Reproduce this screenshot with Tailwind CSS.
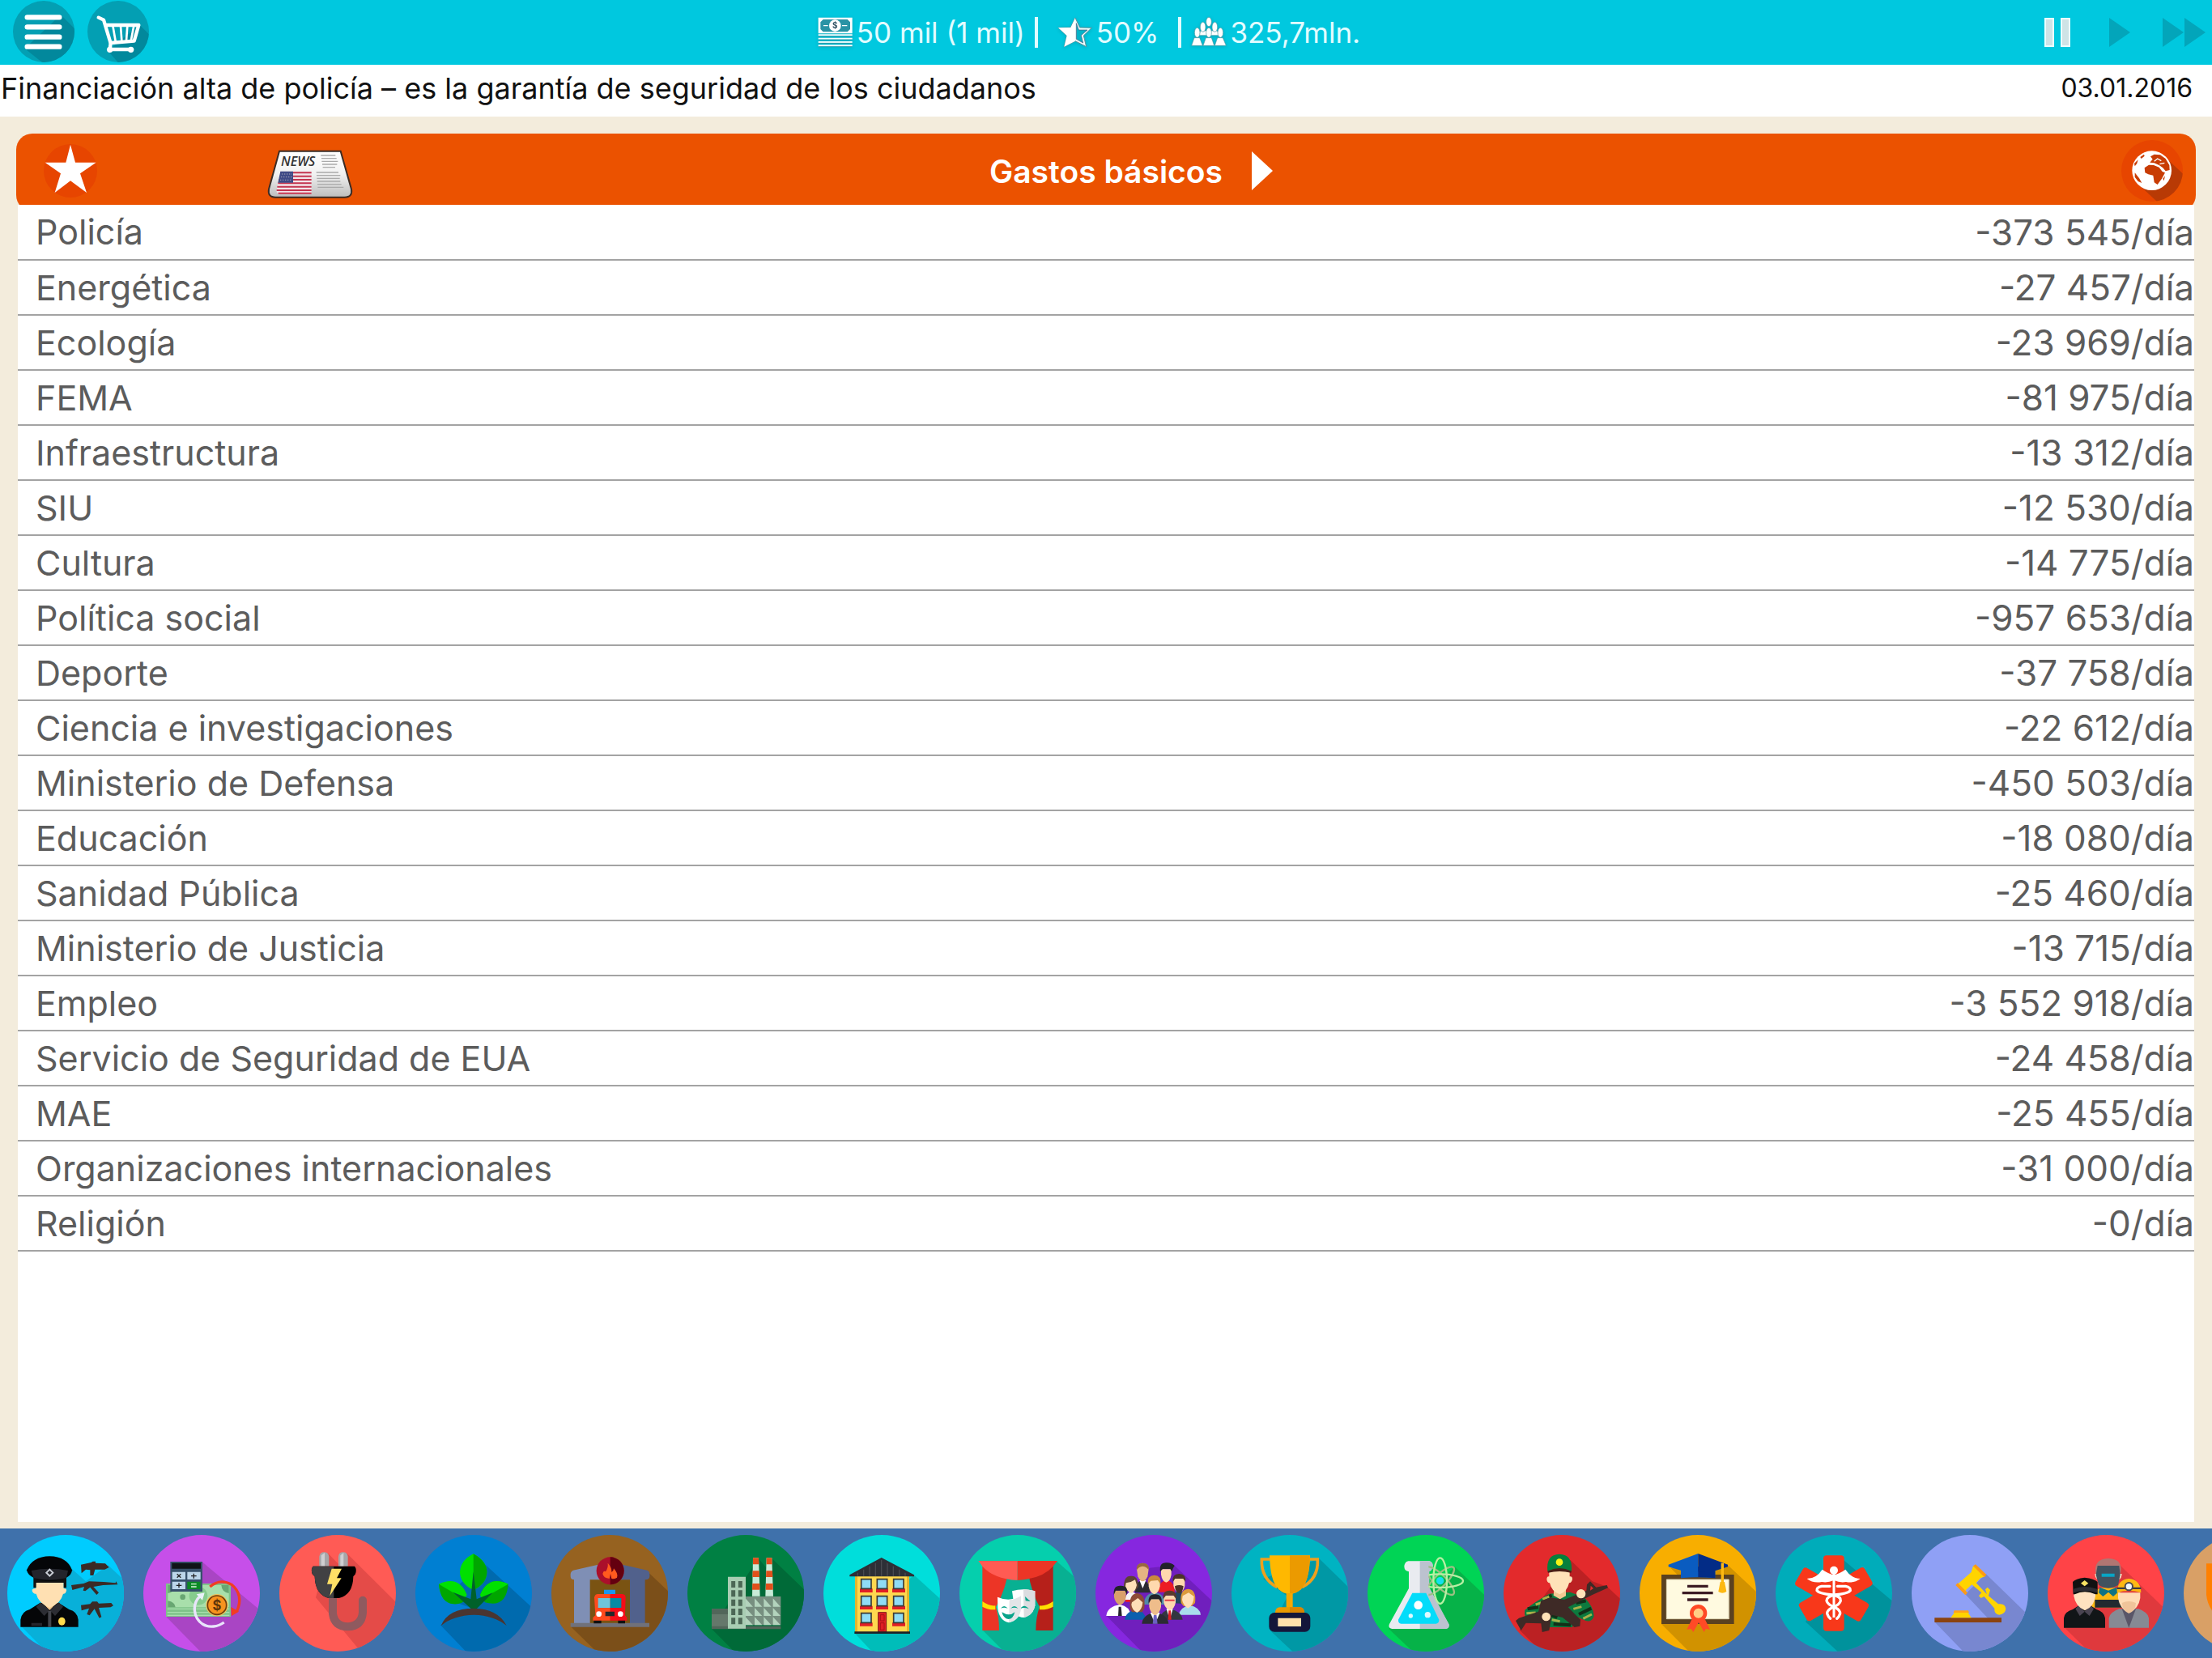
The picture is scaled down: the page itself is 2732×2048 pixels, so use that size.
<!DOCTYPE html>
<html lang="es">
    <head>
        <meta charset="UTF-8">
        <meta name="viewport" content="width=device-width, initial-scale=1.0">
        <title>Gastos básicos</title>
        <script src="https://cdn.jsdelivr.net/npm/@tailwindcss/browser@4"></script>
    </head>
    <body class="min-h-screen flex flex-col overflow-x-hidden bg-[#f3ecdc] font-[Inter,'Noto_Sans',sans-serif]">
        <!-- Barra superior -->
        <header class="h-20 bg-[#00c8df] flex items-center justify-between pl-4 pr-2">
            <div class="flex w-[500px] gap-4 pb-0.5">
                <button type="button" aria-label="Menú" class="size-[76px] rounded-full overflow-hidden bg-[#039fb3]">
                    <svg class="size-full" viewBox="48 3 228 228">
                        <path d="M225 55 290 120V250H180L92 180Z" fill="#02889c"/>
                        <path d="M101 64H220M101 100H220M101 137H220M101 173H220" stroke="#fff" stroke-width="19" stroke-linecap="round"/>
                    </svg>
                </button>
                <button type="button" aria-label="Tienda" class="size-[76px] rounded-full overflow-hidden bg-[#039fb3]">
                    <svg class="size-full" viewBox="322 3 228 228">
                        <path d="M515 92 580 157V260H460L398 188Z" fill="#02889c"/>
                        <g fill="none" stroke="#fff" stroke-linecap="round" stroke-linejoin="round">
                            <path d="M363 65 382 74 408 160 405 183H482" stroke-width="13"/>
                            <path d="M392 93H512L495 152 408 159" stroke-width="13"/>
                            <path d="M416 95 426 152M445 95 449 152M470 95 466 152M494 95 483 152" stroke-width="8"/>
                        </g>
                        <circle cx="405" cy="184" r="11" fill="#fff"/>
                        <circle cx="483" cy="184" r="11" fill="#fff"/>
                    </svg>
                </button>
            </div>
            <div class="flex items-center text-[35px] leading-none text-[#e2fcff]">
                <svg class="w-11 h-10 mr-1 drop-shadow-sm" viewBox="36 64 132 120">
                    <path d="M38 69H164V128H38Z" fill="#fff"/>
                    <path d="M56 76H146L156 86V112L146 122H56L46 112V86Z" fill="#2a93a5"/>
                    <path d="M57 99H74M126 99H145" stroke="#fff" stroke-width="4"/>
                    <circle cx="100" cy="99" r="22" fill="#fff"/>
                    <text x="100" y="110" text-anchor="middle" font-size="30" font-weight="700" fill="#356">$</text>
                    <path d="M38 134H164M38 147H164M38 160H164M38 173H164" stroke="#f4ffff" stroke-width="6"/>
                    <path d="M38 138H164M38 151H164M38 164H164M38 177H164" stroke="#4b8d98" stroke-width="2"/>
                </svg>
                <span>50 mil (1 mil)</span>
                <span class="w-1 h-[38px] ml-3 mr-6 bg-[#e2fcff]"></span>
                <svg class="w-11 h-10 mr-1 drop-shadow-sm" viewBox="923 60 132 120">
                    <path d="M989 66 1006 102 1050 103 1020 132 1030 173 989 152 948 173 958 132 926 103 972 102Z" fill="#eaffff" stroke="#5b8f98" stroke-width="3"/>
                    <path d="M993 86 1002 111 1034 111 1011 131 1018 159 993 145Z" fill="#04b3c8" stroke="#557" stroke-width="2"/>
                    <path d="M989 66V152L948 173 958 132 926 103 972 102Z" fill="#fff"/>
                </svg>
                <span>50%</span>
                <span class="w-1 h-[38px] ml-6 mr-3 bg-[#e2fcff]"></span>
                <svg class="w-11 h-10 mr-1 drop-shadow-sm" viewBox="1415 64 132 120">
                    <g fill="#fff" stroke="#4f98a3" stroke-width="2">
                        <path d="M1444 135 1450 118H1512L1520 135Z"/>
                        <ellipse cx="1481" cy="85" rx="10" ry="17"/>
                        <ellipse cx="1459" cy="104" rx="10" ry="18"/>
                        <ellipse cx="1503" cy="104" rx="10" ry="18"/>
                        <path d="M1417 173 1427 144H1447L1458 173ZM1503 173 1513 144H1533L1545 173ZM1460 173 1470 144H1491L1501 173Z"/>
                        <ellipse cx="1438" cy="125" rx="10" ry="18"/>
                        <ellipse cx="1481" cy="125" rx="10" ry="18"/>
                        <ellipse cx="1524" cy="125" rx="10" ry="18"/>
                    </g>
                </svg>
                <span>325,7mln.</span>
            </div>
            <div class="flex w-[550px] justify-end items-center gap-12">
                <button type="button" aria-label="Pausa" class="flex gap-2">
                    <span class="w-3 h-9 border-2 border-[#eaffff] bg-[#cfe3e6]"></span>
                    <span class="w-3 h-9 border-2 border-[#eaffff] bg-[#cfe3e6]"></span>
                </button>
                <button type="button" aria-label="Reproducir">
                    <svg class="w-[26px] h-9" viewBox="0 0 26 36"><path d="M0 0 26 18 0 36Z" fill="#03a5ba"/></svg>
                </button>
                <button type="button" aria-label="Avance rápido" class="-ml-2">
                    <svg class="w-[53px] h-9" viewBox="0 0 53 36"><path d="M0 0 26 18 0 36ZM27 0 53 18 27 36Z" fill="#03a5ba"/></svg>
                </button>
            </div>
        </header>

        <!-- Noticias y fecha -->
        <div class="h-16 bg-white flex items-center justify-between pl-px pr-6 pb-1.5 text-[#111]">
            <p class="text-[36px] leading-none">Financiación alta de policía – es la garantía de seguridad de los ciudadanos</p>
            <time datetime="2016-01-03" class="text-[32px] leading-none">03.01.2016</time>
        </div>

        <main class="flex-1 flex flex-col px-5 pt-[21px] pb-2">
            <div class="h-24 rounded-[20px] bg-[#eb5200] flex items-center justify-between pl-[34px] pr-4 pb-1">
                <div class="flex w-[500px] items-center">
                    <button type="button" aria-label="Favoritos" class="size-[66px] rounded-full bg-[#e74500]">
                        <svg class="size-full" viewBox="73 57 198 198"><path d="M172 59 190 125H267L208 166 232 237 172 193 114 237 136 166 78 125H155Z" fill="#fff"/></svg>
                    </button>
                    <button type="button" aria-label="Noticias" class="ml-[210px] mt-2">
                        <svg class="w-[106px] h-[60px]" viewBox="901 76 318 180">
                            <defs>
                                <linearGradient id="papel" x1="0" y1="0" x2="0" y2="1">
                                    <stop offset="0" stop-color="#fff"/>
                                    <stop offset=".5" stop-color="#f1f1f1"/>
                                    <stop offset="1" stop-color="#bdbdbd"/>
                                </linearGradient>
                            </defs>
                            <path d="M946 81H1173L1213 222Q1218 252 1188 252H932Q902 252 907 222Z" fill="url(#papel)" stroke="#3c2c25" stroke-width="6"/>
                            <text x="952" y="135" font-family="Open Sans" font-size="48" font-style="italic" font-weight="600" fill="#333">NEWS</text>
                            <path d="M950 156H1065V240H948Q934 238 936 226Z" fill="#f3e6ea"/>
                            <path d="M950 161H1065M947 174H1065M944 187H1065M941 200H1065M938 213H1065M936 226H1065M942 237H1065" stroke="#c43550" stroke-width="6"/>
                            <path d="M950 156H997V198H941Z" fill="#3f4a86"/>
                            <path d="M955 166H993M952 177H993M949 188H993" stroke="#aab" stroke-width="3" stroke-dasharray="4 5"/>
                            <path d="M1100 97H1154M1102 108H1158M1103 119H1163M1105 130H1160M1107 141H1153M1083 160H1165M1084 171H1172M1085 182H1170M1086 193H1172M1087 204H1176M1088 215H1184" stroke="#aaa" stroke-width="4"/>
                        </svg>
                    </button>
                </div>
                <button type="button" class="flex items-center gap-9 text-[39px] leading-none font-semibold text-white">
                    Gastos básicos
                    <svg class="w-[26px] h-12" viewBox="0 0 26 48"><path d="M0 0 26 24 0 48Z" fill="#fff"/></svg>
                </button>
                <div class="flex w-[456px] justify-end">
                    <button type="button" aria-label="Mundo" class="size-[76px] rounded-full overflow-hidden bg-[#e74500]">
                        <svg class="size-full" viewBox="964 519 228 228">
                            <path d="M1126 582 1210 660V760H1110L1026 682Z" fill="#b83a05"/>
                            <circle cx="1077" cy="632" r="73" fill="#fff"/>
                            <g fill="#c83c04">
                                <path d="M1050 622 1066 611 1084 612 1104 620 1116 636 1126 640 1114 662 1098 684 1086 676 1082 650 1064 646 1052 640Z"/>
                                <path d="M1070 602 1080 590 1072 580 1086 572 1108 574 1128 588 1142 612 1143 630 1128 634 1118 622 1104 612 1086 604Z"/>
                                <path d="M1014 640 1030 660 1040 678 1026 672 1014 656ZM1012 606 1026 592 1022 606 1014 616ZM1034 582 1048 572 1050 578 1038 588ZM1118 662 1126 652 1122 670Z"/>
                            </g>
                            <path d="M1086 598 1098 588 1112 596M1106 608 1124 604" fill="none" stroke="#fff" stroke-width="4"/>
                        </svg>
                    </button>
                </div>
            </div>

            <!-- Lista de gastos -->
            <div class="relative -mt-2 mx-0.5 flex-1 bg-white">
                <table class="w-full leading-none text-[#5c5c5c]">
                    <tbody id="gastos"></tbody>
                </table>
            </div>
        </main>

        <!-- Ministerios -->
        <nav class="h-40 bg-[#3f71ab] flex items-center gap-6 pl-[9px] overflow-hidden">
            <button type="button" aria-label="Policía" class="size-36 shrink-0 rounded-full overflow-hidden bg-[#00ccff]">
                <svg class="size-full" viewBox="27 78 432 432">
                    <path d="M262 200 318 250 400 190 470 255V520H180L80 418Z" fill="#08b0d9"/>
                    <path d="M76 419V392Q80 362 110 354L148 330H218L256 354Q287 362 290 392V419Z" fill="#050608"/>
                    <path d="M150 322H216L184 358Z" fill="#f6c98c"/>
                    <path d="M132 240H236V276Q250 276 245 288 242 298 234 296 226 330 184 348 142 330 134 296 124 298 119 286 118 276 132 276Z" fill="#ffe0b2"/>
                    <path d="M124 230H246V274H236V255H134V274H124Z" fill="#111"/>
                    <path d="M99 208Q120 158 184 157 248 158 267 208 266 226 246 236 184 262 124 236 102 226 99 208Z" fill="#050608"/>
                    <path d="M116 210Q184 196 252 210L246 238Q184 252 124 238Z" fill="#23242b"/>
                    <path d="M184 206 196 218 184 230 172 218Z" fill="none" stroke="#c8ccd4" stroke-width="6"/>
                    <path d="M134 344 150 328 184 356 164 378ZM234 344 218 328 184 356 204 378Z" fill="#2c2d33"/>
                    <path d="M178 360H190V419H178Z" fill="#44464d"/>
                    <path d="M116 404H156V415H116Z" fill="#25262c"/>
                    <ellipse cx="229" cy="398" rx="13" ry="15" fill="#ffdc4e"/>
                    <g fill="#3b2a25">
                        <path d="M300 188 338 180 344 176H354V182L390 184 404 198 388 206 352 206 346 228H334V208L318 206 302 220Z"/>
                        <path d="M264 264 310 258 330 250 384 252 428 256 430 250 436 262 382 264 346 270 366 292 358 300 334 272 316 286 308 284 312 270 268 282Z"/>
                        <path d="M300 338 334 334 342 325H360L366 332 412 330 420 340 410 346 366 348 376 382 368 386 350 352 332 376 322 372 330 350 302 358Z"/>
                    </g>
                </svg>
            </button>
            <button type="button" aria-label="Finanzas" class="size-36 shrink-0 rounded-full overflow-hidden bg-[#c64fe9]">
                <svg class="size-full" viewBox="531 78 432 432">
                    <path d="M749 178 970 362V520H752L615 380Z" fill="#a945c4"/>
                    <path d="M615 258H855V381H615Z" fill="#7fc389"/>
                    <path d="M620 352H850M620 365H850M620 376H850" stroke="#a9dfae" stroke-width="4"/>
                    <path d="M622 264H848V346H622Z" fill="#a8dfab"/>
                    <path d="M622 264H650Q648 290 622 294ZM848 264H820Q822 290 848 294ZM622 346H650Q648 326 622 322Z" fill="#68a672"/>
                    <circle cx="735" cy="304" r="34" fill="#86cc8e"/>
                    <circle cx="677" cy="308" r="10" fill="#68a672"/>
                    <path d="M631 177H750V288H631Z" fill="#37516b"/>
                    <path d="M637 182H744V203H637Z" fill="#101418"/>
                    <path d="M638 215H687V243H638ZM694 215H743V243H694ZM638 251H687V279H638Z" fill="#bcd6ea"/>
                    <path d="M694 251H743V279H694Z" fill="#0c8a25"/>
                    <path d="M656 223 670 236M670 223 656 236M708 230H728M718 221V239M653 265H673M663 256V274" stroke="#222" stroke-width="4"/>
                    <path d="M708 260H728M708 270H728" stroke="#d8f5d8" stroke-width="4"/>
                    <path d="M778 270Q815 238 858 262 904 300 878 360" fill="none" stroke="#f23c22" stroke-width="10"/>
                    <path d="M856 345 885 362 858 378Z" fill="#f23c22"/>
                    <path d="M742 304C710 334 716 384 750 408 776 424 808 418 830 402" fill="none" stroke="#e9e4fb" stroke-width="10"/>
                    <path d="M758 292 728 298 750 320Z" fill="#e9f2fb"/>
                    <circle cx="804" cy="338" r="41" fill="#f0c35a"/>
                    <circle cx="804" cy="338" r="35" fill="#f7931e" stroke="#6e3d0c" stroke-width="5"/>
                    <text x="804" y="356" text-anchor="middle" font-size="50" font-weight="700" fill="#5f350a">$</text>
                </svg>
            </button>
            <button type="button" aria-label="Energética" class="size-36 shrink-0 rounded-full overflow-hidden bg-[#ff5b55]">
                <svg class="size-full" viewBox="1035 78 432 432">
                    <path d="M1214 145 1258 190 1284 145 1480 340V520H1345L1170 310Z" fill="#e44b48"/>
                    <path d="M1233 300V370Q1240 418 1288 418 1340 416 1344 366V320" fill="none" stroke="#8f5a5f" stroke-width="30" stroke-linecap="round"/>
                    <path d="M1183 194V158Q1186 142 1200 142 1217 142 1219 158V194ZM1254 194V158Q1256 142 1271 142 1287 142 1289 158V194Z" fill="#a6a6a8"/>
                    <path d="M1190 194V154L1203 144V194ZM1261 194V154L1273 144V194Z" fill="#cfcfd1"/>
                    <path d="M1160 194H1314Q1324 206 1316 224L1309 232Q1308 300 1256 312H1218Q1168 300 1166 232L1158 224Q1150 206 1160 194Z" fill="#000"/>
                    <path d="M1160 194H1237V312H1218Q1168 300 1166 232L1158 224Q1150 206 1160 194Z" fill="#414143"/>
                    <path d="M1229 203H1266L1248 238H1265L1222 304 1231 260H1212Z" fill="#ffe066"/>
                </svg>
            </button>
            <button type="button" aria-label="Ecología" class="size-36 shrink-0 rounded-full overflow-hidden bg-[#007fd2]">
                <svg class="size-full" viewBox="39 78 432 432">
                    <path d="M296 186 480 355V520H236L132 412 250 350 140 310Z" fill="#006aae"/>
                    <path d="M254 148Q304 176 304 216 302 260 254 282 206 260 204 216 206 172 254 148Z" fill="#00e000"/>
                    <path d="M254 148Q304 176 304 216 302 260 254 282Z" fill="#00a600"/>
                    <path d="M126 260Q200 226 230 300L212 328Q134 350 126 260Z" fill="#00e000"/>
                    <path d="M126 260 224 318Q212 336 180 334 132 330 126 260Z" fill="#00a600"/>
                    <path d="M383 260Q310 226 279 300L297 328Q376 350 383 260Z" fill="#00a600"/>
                    <path d="M383 260 285 316 279 300Q310 226 383 260Z" fill="#00e000"/>
                    <path d="M254 214 266 316 326 292 266 352H246L178 290 244 316Z" fill="#00612a"/>
                    <path d="M134 414Q160 350 256 350 346 352 377 414 330 376 256 374 180 376 134 414Z" fill="#4a3530"/>
                </svg>
            </button>
            <button type="button" aria-label="FEMA" class="size-36 shrink-0 rounded-full overflow-hidden bg-[#966220]">
                <svg class="size-full" viewBox="543 78 432 432">
                    <path d="M904 218 990 300V520H720L615 418Z" fill="#7b4f19"/>
                    <path d="M684 244H836V408H684Z" fill="#7a5312"/>
                    <path d="M627 240H686V408H627ZM614 222Q616 210 630 208L716 188H761V244H628Q614 244 614 232Z" fill="#7f8fb5"/>
                    <path d="M834 240H890V408H834ZM761 188H806L892 208Q906 210 907 222V232Q906 244 892 244H761Z" fill="#51618c"/>
                    <path d="M614 404H906V419H614Z" fill="#70717a"/>
                    <circle cx="761" cy="211" r="51" fill="#ab0f2b"/>
                    <path d="M761 160A51 51 0 0 1 761 262Z" fill="#64000f"/>
                    <path d="M752 182Q768 200 766 216 774 212 774 202 792 222 786 236 776 242 766 240L762 222 758 240Q736 238 733 222 736 208 744 214 754 200 752 182Z" fill="#ff5a1e"/>
                    <path d="M738 281H780V300H738Z" fill="#1a95f0"/>
                    <path d="M700 392H728V406H700ZM790 392H816V406H790Z" fill="#111"/>
                    <path d="M702 310Q704 297 716 297H761V395H697V384L706 376Z" fill="#ff4a1c"/>
                    <path d="M761 297H806Q818 298 818 310L816 376 823 384V395H761Z" fill="#f50d18"/>
                    <path d="M716 312H761V348H716Z" fill="#6fc5da"/>
                    <path d="M761 312H802V348H761Z" fill="#078aa3"/>
                    <path d="M743 362H777V379H743Z" fill="#26262a"/>
                    <circle cx="719" cy="371" r="10" fill="#fff"/>
                    <circle cx="799" cy="371" r="10" fill="#fff"/>
                </svg>
            </button>
            <button type="button" aria-label="Infraestructura" class="size-36 shrink-0 rounded-full overflow-hidden bg-[#008043]">
                <svg class="size-full" viewBox="1047 78 432 432">
                    <path d="M1310 165 1340 200 1360 165 1490 290V520H1230L1136 425Z" fill="#006a38"/>
                    <path d="M1290 163H1311L1316 305H1287ZM1340 163H1360L1365 305H1336Z" fill="#c9ead7"/>
                    <path d="M1290 163H1311L1312 187H1290ZM1289 211H1313L1314 234H1288ZM1288 258H1315V281H1287ZM1340 163H1360L1361 187H1340ZM1339 211H1362L1363 234H1338ZM1338 258H1364V281H1337Z" fill="#e2501b"/>
                    <path d="M1137 352H1200V425H1137Z" fill="#65786b"/>
                    <path d="M1137 352H1200V372H1137ZM1137 416H1393V427H1137Z" fill="#52665a"/>
                    <path d="M1262 306H1393V412H1262Z" fill="#778f80"/>
                    <path d="M1262 313 1290 344H1262ZM1296 313 1324 344H1296ZM1330 313 1358 344H1330ZM1364 313 1392 344H1364ZM1262 348 1290 378H1262ZM1296 348 1324 378H1296ZM1330 348 1358 378H1330ZM1364 348 1392 378H1364ZM1262 382 1290 412H1262ZM1296 382 1324 412H1296ZM1330 382 1358 412H1330ZM1364 382 1392 412H1364Z" fill="#b3d3bd"/>
                    <path d="M1197 233H1263V425H1197Z" fill="#a9cdb3"/>
                    <path d="M1217 249V410M1243 249V410" stroke="#4c6756" stroke-width="15" stroke-dasharray="24 10"/>
                </svg>
            </button>
            <button type="button" aria-label="Vivienda" class="size-36 shrink-0 rounded-full overflow-hidden bg-[#00dedb]">
                <svg class="size-full" viewBox="51 78 432 432">
                    <path d="M386 226 500 330V520H240L168 443Z" fill="#00bdb9"/>
                    <path d="M168 228H369V438H168Z" fill="#ffd84f"/>
                    <path d="M168 228H177V438H168ZM360 228H369V438H360Z" fill="#e3b62d"/>
                    <path d="M266 162 387 226V232H148V226Z" fill="#2d2f36"/>
                    <path d="M266 170V230M244 182V230M222 194V230M200 206V230M178 218V230M288 182V230M310 194V230M332 206V230M354 218V230" stroke="#484a50" stroke-width="4"/>
                    <path d="M186 277H233V291H186ZM246 277H291V291H246ZM306 277H354V291H306ZM186 341H233V354H186ZM246 341H291V354H246ZM306 341H354V354H306ZM186 403H233V416H186ZM306 403H354V416H306Z" fill="#e01e24"/>
                    <g fill="#8fdcf5" stroke="#3d3a34" stroke-width="5">
                        <path d="M191 242H228V277H191ZM250 242H287V277H250ZM311 242H348V277H311ZM191 305H228V341H191ZM250 305H287V341H250ZM311 305H348V341H311ZM191 368H228V403H191ZM311 368H348V403H311Z"/>
                    </g>
                    <path d="M254 365H284V438H254Z" fill="#e01e24" stroke="#7c1a1a" stroke-width="3"/>
                    <path d="M262 374H276V396H262ZM262 404H276V430H262Z" fill="none" stroke="#a81218" stroke-width="3"/>
                    <path d="M166 436H372V444H166Z" fill="#1c2226"/>
                </svg>
            </button>
            <button type="button" aria-label="Cultura" class="size-36 shrink-0 rounded-full overflow-hidden bg-[#05cfad]">
                <svg class="size-full" viewBox="555 78 432 432">
                    <path d="M916 176 1000 250V520H730L640 430Z" fill="#08b092"/>
                    <path d="M700 240H840V432H700Z" fill="#08b092"/>
                    <path d="M640 190H740Q728 280 690 345 702 380 702 432H640Z" fill="#ec3526"/>
                    <path d="M902 190H806Q816 280 852 345 838 380 838 432H902Z" fill="#b6201a"/>
                    <path d="M625 174H770V246Q680 240 640 194Z" fill="#ff5b53"/>
                    <path d="M918 174H770V246Q862 240 902 194Z" fill="#ec3526"/>
                    <path d="M640 324Q664 342 688 340V355Q660 356 640 344ZM902 324Q878 342 852 340V355Q882 356 902 344Z" fill="#ffe000"/>
                    <path d="M750 286Q792 274 835 286V340Q828 376 794 384 774 384 762 370Z" fill="#fff"/>
                    <path d="M792 279Q814 279 835 286V340Q828 376 794 384Z" fill="#dcdde0"/>
                    <path d="M798 306 818 324 800 322ZM780 352Q794 330 812 352 794 344 780 352Z" fill="#08a38a"/>
                    <path d="M696 308Q740 328 783 304V350Q780 392 738 403 702 394 697 350Z" fill="#fff"/>
                    <path d="M740 318Q762 318 783 304V350Q780 392 738 403Z" fill="#e3e5e8"/>
                    <path d="M708 350Q720 334 734 350 720 344 708 350ZM745 350Q758 334 772 350 758 344 745 350ZM712 364Q740 382 760 364 754 390 736 390 718 388 712 364Z" fill="#08a38a"/>
                </svg>
            </button>
            <button type="button" aria-label="Política social" class="size-36 shrink-0 rounded-full overflow-hidden bg-[#8627df]">
                <svg class="size-full" viewBox="1059 78 432 432">
                    <path d="M1350 190 1510 340V520H1240L1100 378 1260 200Z" fill="#701fbd"/>
                    <!-- fila trasera -->
                    <path d="M1206 292Q1206 250 1234 246 1262 250 1262 292Z" fill="#2b2b33"/>
                    <path d="M1222 246H1246L1234 276Z" fill="#fff"/>
                    <path d="M1292 290Q1292 250 1322 246 1352 250 1352 290Z" fill="#ec1c24"/>
                    <path d="M1212 205Q1212 184 1234 182 1256 184 1256 205L1252 232Q1244 250 1234 250 1224 250 1216 232Z" fill="#e5b483"/>
                    <path d="M1212 208Q1208 182 1234 182 1260 182 1256 208 1250 196 1234 194 1218 196 1212 208Z" fill="#99693f"/>
                    <path d="M1302 205H1340V225Q1336 250 1321 254 1306 250 1302 225Z" fill="#ffd9ae"/>
                    <path d="M1299 214Q1294 180 1322 181 1340 180 1352 192 1346 200 1342 214L1336 204 1308 204Z" fill="#22222a"/>
                    <!-- segunda fila -->
                    <path d="M1168 320Q1170 292 1192 288 1216 292 1218 320Z" fill="#f4f4f6"/>
                    <path d="M1238 336Q1240 296 1278 290 1316 296 1318 336Z" fill="#5289a8"/>
                    <path d="M1342 330Q1344 292 1368 284 1394 292 1394 334Z" fill="#23455e"/>
                    <path d="M1164 270Q1164 228 1191 230 1218 228 1218 270L1206 286H1174Z" fill="#5d4235"/>
                    <path d="M1172 256Q1192 254 1206 244L1212 264Q1206 290 1191 294 1176 288 1170 268Z" fill="#ffe0b8"/>
                    <path d="M1256 244H1298V268Q1294 292 1277 298 1260 292 1256 268Z" fill="#ffd9ae"/>
                    <path d="M1253 260Q1250 228 1277 227 1304 228 1300 260L1290 246 1264 248Z" fill="#c98a3c"/>
                    <path d="M1348 240H1390V266Q1386 288 1369 292 1352 288 1348 266Z" fill="#ffd9ae"/>
                    <path d="M1346 252Q1342 222 1369 222 1396 222 1392 252L1384 240H1354Z" fill="#4c3329"/>
                    <path d="M1353 268Q1369 260 1385 268 1382 294 1369 294 1356 294 1353 268Z" fill="#4c3329"/>
                    <path d="M1170 318H1190V326H1170Z" fill="#ec1c24"/>
                    <!-- primera fila -->
                    <path d="M1099 378Q1102 344 1150 336 1186 342 1190 378Z" fill="#fff"/>
                    <path d="M1145 344H1154L1157 378H1143Z" fill="#26262e"/>
                    <path d="M1128 284H1172V308Q1168 332 1150 338 1132 332 1128 308Z" fill="#d9a06b"/>
                    <path d="M1127 300Q1124 266 1150 266 1182 264 1176 300L1168 284H1134Z" fill="#22222a"/>
                    <path d="M1368 374Q1372 346 1408 338 1446 346 1449 374Z" fill="#a9dcec"/>
                    <path d="M1376 330Q1370 280 1402 278 1434 280 1428 330L1416 342H1386Z" fill="#dc9a3c"/>
                    <path d="M1382 304 1404 292 1424 306Q1422 340 1402 350 1384 340 1380 318Z" fill="#ffe0b8"/>
                    <path d="M1168 392Q1170 362 1212 354 1244 362 1246 392Z" fill="#0b5fae"/>
                    <path d="M1187 350Q1182 296 1213 294 1246 296 1240 350L1232 364H1194Z" fill="#8e4b36"/>
                    <path d="M1194 328 1216 312 1234 328Q1232 356 1213 366 1194 356 1192 336Z" fill="#ffe0b8"/>
                    <path d="M1296 392Q1300 362 1334 352 1378 362 1382 392Z" fill="#333640"/>
                    <path d="M1322 352H1346L1334 392Z" fill="#fff"/>
                    <path d="M1330 358H1338L1340 392H1328Z" fill="#e01e24"/>
                    <path d="M1312 302H1356V328Q1352 352 1334 358 1316 350 1312 328Z" fill="#ffd9ae"/>
                    <path d="M1310 316Q1306 284 1334 284 1362 284 1358 316L1348 302H1320Z" fill="#5b3a2c"/>
                    <path d="M1316 320H1352" stroke="#e2404a" stroke-width="6"/>
                    <path d="M1231 407Q1234 374 1280 364 1326 374 1330 407Z" fill="#2b2b33"/>
                    <path d="M1262 366H1298L1280 407Z" fill="#fff"/>
                    <path d="M1275 374H1285L1289 407H1271Z" fill="#6c5fc2"/>
                    <path d="M1258 316H1302V344Q1298 368 1280 376 1262 368 1258 344Z" fill="#efbd8b"/>
                    <path d="M1256 332Q1252 298 1280 298 1308 298 1304 332L1294 316H1266Z" fill="#22222a"/>
                </svg>
            </button>
            <button type="button" aria-label="Deporte" class="size-36 shrink-0 rounded-full overflow-hidden bg-[#00b3c2]">
                <svg class="size-full" viewBox="63 78 432 432">
                    <path d="M388 166 510 285V520H300L206 432 270 305 180 240Z" fill="#0098a5"/>
                    <path d="M206 168H175Q172 240 232 272M350 168H382Q386 240 324 272" fill="none" stroke="#f0a01c" stroke-width="11"/>
                    <path d="M204 154H354Q352 250 320 280 300 296 278 298 256 296 238 280 206 250 204 154Z" fill="#ffb800"/>
                    <path d="M279 154H354Q352 250 320 280 300 296 279 298Z" fill="#eb9a00"/>
                    <path d="M266 294H290V350H266Z" fill="#f6a800"/>
                    <path d="M224 368Q226 346 242 346H316Q332 346 334 368Z" fill="#eb9a00"/>
                    <path d="M279 346H316Q332 346 334 368H279Z" fill="#d88400"/>
                    <rect x="202" y="366" width="153" height="71" rx="20" fill="#14163a"/>
                    <path d="M235 386H321V417H235Z" fill="#ffe0ab"/>
                </svg>
            </button>
            <button type="button" aria-label="Ciencia e investigaciones" class="size-36 shrink-0 rounded-full overflow-hidden bg-[#00d455]">
                <svg class="size-full" viewBox="567 78 432 432">
                    <path d="M890 196 1010 310V520H745L646 426Z" fill="#06b248"/>
                    <path d="M718 175H796Q812 180 808 198 804 212 790 214V272L868 408Q872 424 856 426H658Q642 424 648 408L720 276V214Q704 212 703 196 704 178 718 175Z" fill="#e9ebf0"/>
                    <path d="M761 175H796Q812 180 808 198 804 212 796 214V272L868 408Q872 424 856 426H761Z" fill="#bcc2cf"/>
                    <path d="M733 293H784L832 392Q832 406 820 407H692Q680 406 681 392Z" fill="#04dcfa"/>
                    <circle cx="755" cy="338" r="16" fill="#fff"/>
                    <circle cx="790" cy="374" r="11" fill="#dffaff"/>
                    <circle cx="727" cy="378" r="8" fill="#dffaff"/>
                    <svg x="793" y="150" width="150" height="200" viewBox="793 150 150 200">
                        <g fill="none" stroke="#b7f0a4" stroke-width="7">
                            <ellipse cx="836" cy="248" rx="70" ry="22" transform="rotate(45 836 248)" stroke="#9bbf83"/>
                            <ellipse cx="836" cy="248" rx="70" ry="22" transform="rotate(-45 836 248)" stroke="#9bbf83"/>
                            <ellipse cx="836" cy="248" rx="25" ry="85"/>
                            <ellipse cx="836" cy="248" rx="85" ry="25"/>
                        </g>
                        <circle cx="836" cy="248" r="14" fill="#16dff0"/>
                    </svg>
                </svg>
            </button>
            <button type="button" aria-label="Ministerio de Defensa" class="size-36 shrink-0 rounded-full overflow-hidden bg-[#e32a2c]">
                <svg class="size-full" viewBox="1071 78 432 432">
                    <path d="M1318 170 1400 250 1455 270 1515 325V520H1220L1130 430Z" fill="#bb2123"/>
                    <path d="M1240 296 1318 290 1368 308Q1404 340 1406 378 1400 402 1376 396L1340 380 1326 420H1240L1218 390 1160 392Q1146 380 1150 356Q1180 330 1240 296Z" fill="#0d7a3e"/>
                    <path d="M1160 352 1200 346M1172 384 1206 376M1230 310 1250 302M1340 330 1376 322M1350 372 1396 350M1256 408 1320 412M1240 372 1270 384" stroke="#123018" stroke-width="12"/>
                    <path d="M1190 336 1214 328M1156 368 1190 366M1366 388 1398 372M1330 352 1360 344M1250 392 1280 398M1216 316 1240 306" stroke="#a9b04a" stroke-width="9"/>
                    <path d="M1258 280H1302V304L1280 316 1256 302Z" fill="#f3c993"/>
                    <path d="M1240 212H1316V232Q1326 230 1326 242 1324 254 1314 256 1306 290 1279 298 1250 290 1242 256 1232 254 1231 242 1232 230 1240 232Z" fill="#ffe2b8"/>
                    <path d="M1234 212Q1228 150 1278 149 1328 150 1323 212Q1278 196 1234 212Z" fill="#06803c"/>
                    <path d="M1234 212Q1278 190 1323 212L1321 218Q1278 208 1236 218Z" fill="#4a2018"/>
                    <circle cx="1278" cy="179" r="13" fill="#f4f417"/>
                    <path d="M1116 396 1128 386 1200 362 1210 322 1246 310 1296 318 1378 284 1380 262 1392 250 1414 272 1454 264 1458 274 1400 300 1376 312 1310 346 1356 392 1354 416 1334 420 1290 384 1250 374 1240 432 1214 438 1210 406 1154 404 1136 432Z" fill="#3e2a26"/>
                    <path d="M1394 266 1404 276 1392 284Z" fill="#e32a2c"/>
                    <circle cx="1358" cy="296" r="17" fill="#ffe2b8"/>
                    <circle cx="1229" cy="381" r="16" fill="#ffe2b8"/>
                </svg>
            </button>
            <button type="button" aria-label="Educación" class="size-36 shrink-0 rounded-full overflow-hidden bg-[#f8ae00]">
                <svg class="size-full" viewBox="75 78 432 432">
                    <path d="M402 190 520 300V520H268L156 408 220 230 190 200Z" fill="#d19200"/>
                    <path d="M165 234H416V399H165Z" fill="#fffae0" stroke="#5a4120" stroke-width="18"/>
                    <path d="M175 243H405V389H175Z" fill="none" stroke="#d9cfae" stroke-width="3"/>
                    <path d="M252 268H329M233 293H347M252 318H329" stroke="#3c1c24" stroke-width="10"/>
                    <path d="M228 196H355V238Q291 232 228 238Z" fill="#0a5cc0"/>
                    <path d="M292 196H355V238Q322 234 292 234Z" fill="#032c86"/>
                    <path d="M292 147 182 188V196L238 212 292 214Z" fill="#0a5cc0"/>
                    <path d="M292 147 402 188V196L350 212 292 214Z" fill="#032c86"/>
                    <path d="M382 182V262" stroke="#fdb913" stroke-width="10"/>
                    <path d="M374 252H390L397 288Q382 298 367 288Z" fill="#fdb913"/>
                    <path d="M270 388 250 428 266 426 274 438 294 402 314 438 320 426 336 428 316 388Z" fill="#ff4a26"/>
                    <circle cx="293" cy="368" r="25" fill="#ffcf86" stroke="#ff4a26" stroke-width="14"/>
                </svg>
            </button>
            <button type="button" aria-label="Sanidad Pública" class="size-36 shrink-0 rounded-full overflow-hidden bg-[#00acba]">
                <svg class="size-full" viewBox="579 78 432 432">
                    <path d="M830 170 1020 330V520H820L690 400Z" fill="#00929c"/>
                    <g fill="#f8381a">
                        <rect x="756" y="154" width="77" height="280" rx="12"/>
                        <rect x="756" y="154" width="77" height="280" rx="12" transform="rotate(60 795 302)"/>
                        <rect x="756" y="154" width="77" height="280" rx="12" transform="rotate(-60 795 302)"/>
                    </g>
                    <circle cx="795" cy="209" r="15" fill="#fff"/>
                    <path d="M695 240Q730 240 752 206 774 222 795 226 816 222 838 206 860 240 893 240 870 258 840 252 818 256 795 246 772 256 750 252 718 258 695 240Z" fill="#fff"/>
                    <path d="M795 220V384" stroke="#fff" stroke-width="9"/>
                    <g fill="none" stroke="#fff" stroke-width="10" stroke-linecap="round">
                        <path d="M780 268H750Q730 272 732 284 740 296 790 300 822 306 820 322 816 336 795 344 768 356 770 370 774 382 782 388"/>
                        <path d="M808 268H838Q858 272 856 284 848 296 798 300 768 306 768 322 772 336 795 344 820 356 818 370 814 382 806 388"/>
                    </g>
                </svg>
            </button>
            <button type="button" aria-label="Ministerio de Justicia" class="size-36 shrink-0 rounded-full overflow-hidden bg-[#8fa0f5]">
                <svg class="size-full" viewBox="93 78 432 432">
                    <path d="M368 222 540 390V520H294L180 402H390L292 298Z" fill="#7887d0"/>
                    <path d="M178 385H426V402H178Z" fill="#8b4310"/>
                    <path d="M238 385 254 362H300L314 385Z" fill="#ffd400"/>
                    <path d="M251 358H303L306 366H248Z" fill="#ffa31a"/>
                    <path d="M321 193 365 232 348 238 332 256 372 298 366 280 374 272 384 282 378 304 414 334Q440 330 442 352 440 372 418 374 398 372 400 350L362 306 350 312 342 304 352 292 316 262 294 282 292 297 262 262 280 246 314 216Z" fill="#ffd400"/>
                    <path d="M321 193 330 187 370 225 362 234ZM264 256 256 264 292 301 300 292Z" fill="#ff9a14"/>
                </svg>
            </button>
            <button type="button" aria-label="Empleo" class="size-36 shrink-0 rounded-full overflow-hidden bg-[#ff4347]">
                <svg class="size-full" viewBox="597 78 432 432">
                    <path d="M860 185 1040 360V520H760L658 420Z" fill="#df393d"/>
                    <path d="M760 347V310Q766 284 796 274H846Q876 284 878 347Z" fill="#fdb913"/>
                    <path d="M772 318H876V347H772Z" fill="#222a30"/>
                    <path d="M790 272 822 284 852 272 856 292 840 306 822 290 802 306 786 292Z" fill="#0f7384"/>
                    <path d="M776 226Q764 166 822 165 880 166 866 226Z" fill="#b07672"/>
                    <path d="M772 222H784V244Q774 242 772 222ZM872 222H860V244Q870 242 872 222Z" fill="#ffe2c4"/>
                    <path d="M782 192H862L866 226 858 264Q822 286 786 264L776 226Z" fill="#41525f"/>
                    <path d="M797 221H845V233H797Z" fill="#08a5c4"/>
                    <path d="M657 422V386Q660 362 690 354L712 340H756L778 354Q806 362 810 386V422Z" fill="#111517"/>
                    <path d="M712 340 734 362 756 340 768 352 752 378 734 362 716 378 700 352Z" fill="#4a4451"/>
                    <path d="M696 286H774V304Q770 344 735 358 700 344 694 304Z" fill="#ffe2c0"/>
                    <path d="M690 252Q700 240 734 236 770 240 782 252V298H774Q734 280 698 298H692Z" fill="#111"/>
                    <path d="M692 278Q734 262 780 278V292Q734 278 692 292Z" fill="#2c2c33"/>
                    <path d="M720 257 734 246 748 257 734 268Z" fill="#f7e263"/>
                    <path d="M824 422V386Q828 364 862 352H934Q968 364 972 386V422Z" fill="#868a94"/>
                    <path d="M872 352H924L898 422Z" fill="#5a5668"/>
                    <path d="M858 292H940V312Q934 352 898 368 864 352 858 312Z" fill="#ffdcb6"/>
                    <path d="M872 330Q898 318 924 330 922 362 898 368 876 362 872 330Z" fill="#f0c49a"/>
                    <path d="M854 292Q854 244 898 240 942 244 943 292Q898 278 854 292Z" fill="#fdb913"/>
                    <path d="M854 272H943V279H854Z" fill="#3b3b40"/>
                    <circle cx="898" cy="269" r="14" fill="#eef6fb" stroke="#4a4a50" stroke-width="6"/>
                </svg>
            </button>
            <button type="button" aria-label="Servicio de Seguridad" class="size-36 shrink-0 rounded-full overflow-hidden bg-[#d9a066]">
                <svg class="size-full" viewBox="1101 78 432 432">
                    <path d="M1185 184H1448V300Q1440 390 1317 430 1194 390 1185 300Z" fill="#ff8000"/>
                    <path d="M1317 184H1448V300Q1440 390 1317 430Z" fill="#e56f00"/>
                </svg>
            </button>
        </nav>

        <script>
        // ===== GASTOS POR DÍA =====
        const gastos = [
            ["Policía", "-373 545"],
            ["Energética", "-27 457"],
            ["Ecología", "-23 969"],
            ["FEMA", "-81 975"],
            ["Infraestructura", "-13 312"],
            ["SIU", "-12 530"],
            ["Cultura", "-14 775"],
            ["Política social", "-957 653"],
            ["Deporte", "-37 758"],
            ["Ciencia e investigaciones", "-22 612"],
            ["Ministerio de Defensa", "-450 503"],
            ["Educación", "-18 080"],
            ["Sanidad Pública", "-25 460"],
            ["Ministerio de Justicia", "-13 715"],
            ["Empleo", "-3 552 918"],
            ["Servicio de Seguridad de EUA", "-24 458"],
            ["MAE", "-25 455"],
            ["Organizaciones internacionales", "-31 000"],
            ["Religión", "-0"]
        ];

        document.getElementById("gastos").innerHTML = gastos.map(([nombre, valor]) => `
            <tr class="h-[68px] border-b-2 border-[#a3a3a3]">
                <th scope="row" class="pl-[22px] text-left text-[43px] font-normal">${nombre}</th>
                <td class="text-right text-[44px]">${valor}/día</td>
            </tr>
        `).join("");
        </script>
    </body>
</html>
